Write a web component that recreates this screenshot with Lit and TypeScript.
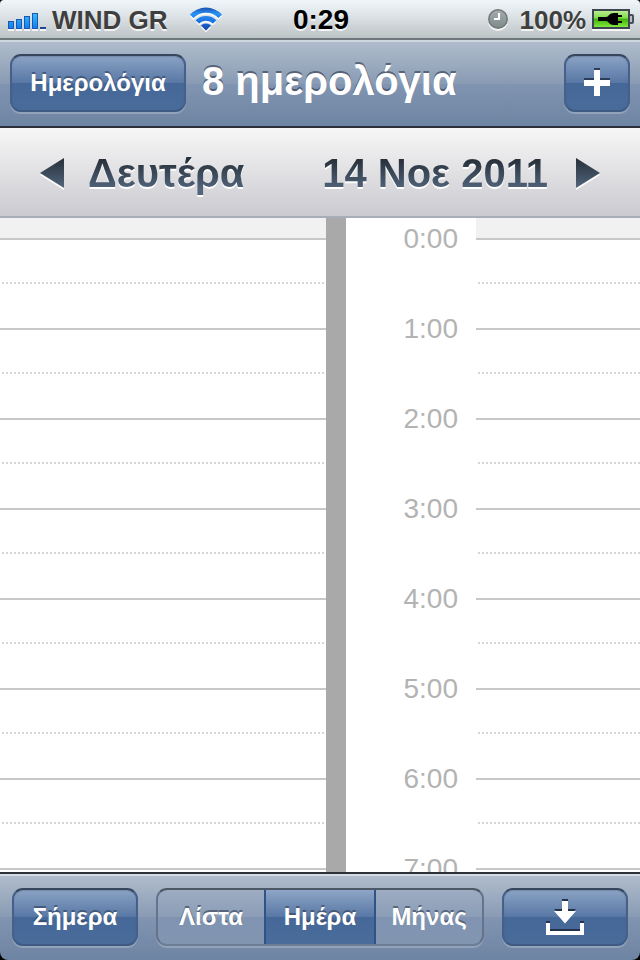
import { LitElement, html, css, svg } from "lit";
import { customElement, property, state } from "lit/decorators.js";
import { classMap } from "lit/directives/class-map.js";

const FONT = css`"Liberation Sans", Arial, Helvetica, sans-serif`;

const buttonStyles = css`
  button {
    font: bold 24px/54px ${FONT};
    color: #fff;
    margin: 0;
    padding: 0;
    text-align: center;
    white-space: nowrap;
    cursor: pointer;
  }
  .push {
    box-sizing: border-box;
    height: 58px;
    border: 2px solid;
    border-color: #37465c #46608a #3f5a83;
    border-radius: 11px;
    background: linear-gradient(#8ea6c6 0, #5877a5 50%, #466898 50%, #4a6c9b 100%) border-box;
    box-shadow: 0 2px 0 rgba(255, 255, 255, 0.22), inset 0 1px 1px rgba(30, 50, 80, 0.2);
    text-shadow: 0 -2px 0 rgba(40, 55, 80, 0.55);
  }
  svg {
    display: block;
    margin: 0 auto;
  }
`;

@customElement("status-bar")
class StatusBar extends LitElement {
  static styles = css`
    :host {
      display: grid;
      grid-template-columns: 1fr auto 1fr;
      align-items: center;
      box-sizing: border-box;
      height: 40px;
      padding: 2px 6px 0 8px;
      background: linear-gradient(#f0f7fa, #dbe1e4 45%, #bcc3c5);
      border-bottom: 2px solid #6e777c;
      font: bold 26px/36px ${FONT};
      color: #3f3f3f;
      text-shadow: 0 2px 0 rgba(255, 255, 255, 0.8);
    }
    .side {
      display: flex;
      align-items: center;
      white-space: nowrap;
    }
    .end {
      justify-content: flex-end;
    }
    .carrier {
      margin: 0 22px 0 6px;
    }
    .time {
      font-size: 28px;
      color: #000;
    }
    .percent {
      margin: 0 6px 0 12px;
    }
    svg {
      display: block;
      flex: none;
    }
  `;

  render() {
    const bars = [
      [0, 8],
      [8, 10],
      [16, 13],
      [24, 16],
    ];
    return html`
      <div class="side">
        <svg width="38" height="22" viewBox="0 0 38 22" role="img" aria-label="Signal">
          <defs>
            <linearGradient id="sig" gradientUnits="userSpaceOnUse" x1="0" y1="4" x2="0" y2="20">
              <stop offset="0" stop-color="#35c0fb" />
              <stop offset="1" stop-color="#0f7cf0" />
            </linearGradient>
          </defs>
          ${bars.map(
            ([x, h]) => svg`
              <rect x=${x} y=${22 - h} width="6" height=${h} fill="#fff" opacity=".8" />
              <rect x=${x + 0.5} y=${20.5 - h} width="5" height=${h - 1} fill="url(#sig)" stroke="#1c57b4" />`
          )}
          <rect x="32" y="20" width="6" height="2" fill="#fff" opacity=".8" />
          <rect x="32" y="18" width="6" height="2" fill="#1c4596" />
        </svg>
        <span class="carrier">WIND GR</span>
        <svg width="32" height="26" viewBox="0 0 32 26" role="img" aria-label="Wi-Fi">
          <defs>
            <linearGradient id="wifi" gradientUnits="userSpaceOnUse" x1="0" y1="1" x2="0" y2="24">
              <stop offset="0" stop-color="#1d55b4" />
              <stop offset=".25" stop-color="#2a92f4" />
              <stop offset=".6" stop-color="#1a70e4" />
              <stop offset="1" stop-color="#0f3a9e" />
            </linearGradient>
            <g id="waves">
              <path d="M0 7.500 A22 22 0 0 1 32 7.500 L28.500 11 A17.500 17.500 0 0 0 3.500 11 Z" />
              <path d="M5.700 13.200 A14.500 14.500 0 0 1 26.300 13.200 L23 16.500 A10 10 0 0 0 9 16.500 Z" />
              <path d="M11 18.500 A7 7 0 0 1 21 18.500 L16 23.500 Z" />
            </g>
          </defs>
          <use href="#waves" y="2" fill="#fff" opacity=".8" />
          <use href="#waves" fill="url(#wifi)" />
        </svg>
      </div>
      <span class="time">0:29</span>
      <div class="side end">
        <svg width="20" height="22" viewBox="0 0 20 22" role="img" aria-label="Alarm">
          <defs>
            <linearGradient id="clk" x1="0" y1="0" x2="0" y2="1">
              <stop offset="0" stop-color="#a3acac" />
              <stop offset="1" stop-color="#7f8a8a" />
            </linearGradient>
          </defs>
          <circle cx="10" cy="12" r="10" fill="#fff" opacity=".8" />
          <circle cx="10" cy="10" r="10" fill="#6f7877" />
          <circle cx="10" cy="10" r="8.500" fill="url(#clk)" />
          <path d="M11 4 V10 H6" fill="none" stroke="#fff" stroke-width="2" />
        </svg>
        <span class="percent">100%</span>
        <svg width="42" height="22" viewBox="0 0 42 22" role="img" aria-label="Battery charging">
          <defs>
            <linearGradient id="bat" x1="0" y1="0" x2="0" y2="1">
              <stop offset="0" stop-color="#c0ee98" />
              <stop offset=".45" stop-color="#7fdc4a" />
              <stop offset=".5" stop-color="#3fae0a" />
              <stop offset="1" stop-color="#8af045" />
            </linearGradient>
          </defs>
          <rect y="20" width="38" height="2" fill="#fff" opacity=".8" />
          <path d="M38 5 H40 Q42 5 42 7 V13 Q42 15 40 15 H38 Z" fill="#4a4f5c" />
          <rect x="38" y="7" width="2" height="6" fill="#b9bfc4" />
          <rect x="1" y="1" width="36" height="18" fill="url(#bat)" stroke="#3e4450" stroke-width="2" />
          <path
            d="M6 8 H14 Q16 8 17 6 Q18.500 4 22 4 H26 V6 H30 V8 H26 V12 H30 V14 H26 V16 H22 Q18.500 16 17 14 Q16 12 14 12 H6 Z"
            fill="#000"
          />
        </svg>
      </div>
    `;
  }
}

@customElement("nav-header")
class NavHeader extends LitElement {
  static styles = [
    buttonStyles,
    css`
      :host {
        display: flex;
        align-items: flex-start;
        gap: 16px;
        box-sizing: border-box;
        height: 88px;
        padding: 12px 10px 0;
        border-top: 2px solid #cdd5df;
        border-bottom: 2px solid #2d3039;
        background: linear-gradient(#b0bccd, #889bb3 50%, #8195b2 50%, #6d84a2);
      }
      .calendars {
        flex: none;
        width: 176px;
      }
      .add {
        flex: none;
        width: 66px;
      }
      h1 {
        flex: 1;
        margin: 0;
        font: bold 40px/54px ${FONT};
        color: #fff;
        text-shadow: 0 -2px 0 rgba(50, 60, 80, 0.65);
        white-space: nowrap;
      }
    `,
  ];

  render() {
    return html`
      <button class="push calendars">Ημερολόγια</button>
      <h1>8 ημερολόγια</h1>
      <button class="push add" aria-label="Προσθήκη">
        <svg width="26" height="30" viewBox="0 0 26 30">
          <path d="M10 0 H16 V10 H26 V16 H16 V26 H10 V16 H0 V10 H10 Z" fill="#2c3d58" />
          <path d="M10 2 H16 V12 H26 V18 H16 V28 H10 V18 H0 V12 H10 Z" fill="#fff" />
        </svg>
      </button>
    `;
  }
}

@customElement("date-strip")
class DateStrip extends LitElement {
  @property() weekday = "";
  @property() date = "";

  static styles = css`
    :host {
      display: flex;
      align-items: center;
      box-sizing: border-box;
      height: 90px;
      padding: 2px 40px 0;
      gap: 24px;
      background: linear-gradient(#f7f7f7, #cbcad0);
      border-bottom: 2px solid #a8aeb8;
    }
    button {
      flex: none;
      margin: 0;
      padding: 2px 0 0;
      border: 0;
      background: none;
      cursor: pointer;
    }
    svg {
      display: block;
    }
    h2 {
      flex: 1;
      display: flex;
      justify-content: space-between;
      margin: 0;
      padding-right: 4px;
      font: bold 40px/46px ${FONT};
      white-space: nowrap;
      filter: drop-shadow(0 2px 0 #fff);
    }
    .label {
      color: transparent;
      background: linear-gradient(#27303a 20%, #52657c 85%);
      -webkit-background-clip: text;
      background-clip: text;
    }
  `;

  private arrow(d: string) {
    return html`<svg width="24" height="32" viewBox="0 0 24 32">
      <defs>
        <linearGradient id="tri" x1="0" y1="0" x2="0" y2="1">
          <stop offset="0" stop-color="#27303a" />
          <stop offset="1" stop-color="#52657c" />
        </linearGradient>
      </defs>
      <path d=${d} fill="#fff" transform="translate(0 2)" />
      <path d=${d} fill="url(#tri)" />
    </svg>`;
  }

  render() {
    return html`
      <button aria-label="Προηγούμενη">${this.arrow("M24 0 V30 L0 15 Z")}</button>
      <h2>
        <span class="label">${this.weekday}</span>
        <span class="label">${this.date}</span>
      </h2>
      <button aria-label="Επόμενη">${this.arrow("M0 0 V30 L24 15 Z")}</button>
    `;
  }
}

@customElement("day-grid")
class DayGrid extends LitElement {
  @property({ type: Number }) hours = 24;

  static styles = css`
    :host {
      display: grid;
      grid-template-columns: 326fr 20px 130px 164fr;
      overflow: hidden auto;
      scrollbar-width: none;
      background: #fff;
    }
    .lane {
      padding-top: 20px;
      background: linear-gradient(#f1f1f1, #f1f1f1) 0 0 / 100% 20px no-repeat;
    }
    .hour {
      box-sizing: border-box;
      height: 90px;
      border-top: 2px solid #c8c8c8;
    }
    .half {
      height: 2px;
      padding: 42px 0 0 2px;
      background: repeating-linear-gradient(90deg, #d6d6d6 0 2px, transparent 2px 4px) content-box;
    }
    .divider {
      background: #a9a9a9;
    }
    .times {
      display: flex;
      flex-direction: column;
      gap: 48px;
      padding-right: 18px;
      font: 28px/42px ${FONT};
      color: #b3b3b3;
      text-align: right;
    }
  `;

  render() {
    const hours = Array.from({ length: this.hours }, (_, h) => h);
    const lane = html`<div class="lane">
      ${hours.map(() => html`<div class="hour"><div class="half"></div></div>`)}
    </div>`;
    return html`
      ${lane}
      <div class="divider"></div>
      <div class="times">${hours.map((h) => html`<time>${h}:00</time>`)}</div>
      ${lane}
    `;
  }
}

@customElement("tool-bar")
class ToolBar extends LitElement {
  @state() private view = "Ημέρα";

  static styles = [
    buttonStyles,
    css`
      :host {
        display: grid;
        grid-template-columns: 126fr 328fr 126fr;
        align-items: center;
        gap: 18px;
        box-sizing: border-box;
        height: 88px;
        padding: 0 12px;
        border-top: 2px solid #2d3039;
        background: linear-gradient(#d5dce4 2px, #b0bccd 2px, #889bb3 50%, #8195b2 50%, #6d84a2);
      }
      .segments {
        display: grid;
        grid-template-columns: 1fr 112px 1fr;
        box-sizing: border-box;
        height: 58px;
        border: 2px solid;
        border-color: #4d5866 #64748c #6c7d95;
        border-radius: 11px;
        overflow: hidden;
        background: linear-gradient(#9eadc2, #8b9db7 50%, #8094b2 50%, #8296b1) border-box;
        box-shadow: 0 2px 0 rgba(255, 255, 255, 0.22);
      }
      .segment {
        border: 0;
        background: none;
        text-shadow: 0 -2px 0 rgba(50, 60, 80, 0.6);
      }
      .selected {
        border: solid #2f5388;
        border-width: 0 2px;
        background: linear-gradient(#8ea6c6, #5877a5 50%, #466898 50%, #4a6c9b);
      }
    `,
  ];

  render() {
    return html`
      <button class="push">Σήμερα</button>
      <div class="segments" role="group">
        ${["Λίστα", "Ημέρα", "Μήνας"].map(
          (name) => html`<button
            class=${classMap({ segment: true, selected: name === this.view })}
            aria-pressed=${name === this.view}
            @click=${() => (this.view = name)}
          >${name}</button>`
        )}
      </div>
      <button class="push" aria-label="Εισερχόμενα">
        <svg width="38" height="36" viewBox="0 0 38 36">
          <g fill="#22324c">
            <path d="M16 0 H22 V10 H30 L19 22 L8 10 H16 Z" />
            <path d="M0 22 H4 V30 H34 V22 H38 V34 H0 Z" />
          </g>
          <g fill="#fff">
            <path d="M16 2 H22 V12 H30 L19 24.500 L8 12 H16 Z" />
            <path d="M0 24 H4 V32 H34 V24 H38 V36 H0 Z" />
          </g>
        </svg>
      </button>
    `;
  }
}

@customElement("app-root")
class AppRoot extends LitElement {
  static styles = css`
    :host {
      display: block;
      background: #000;
    }
    .screen {
      display: flex;
      flex-direction: column;
      height: 100vh;
      overflow: hidden;
      border-radius: 4px 4px 8px 8px;
    }
    status-bar,
    nav-header,
    date-strip,
    tool-bar {
      flex: none;
    }
    day-grid {
      flex: 1;
      min-height: 0;
    }
  `;

  render() {
    return html`
      <div class="screen">
        <status-bar></status-bar>
        <nav-header></nav-header>
        <date-strip weekday="Δευτέρα" date="14 Νοε 2011"></date-strip>
        <day-grid hours="8"></day-grid>
        <tool-bar></tool-bar>
      </div>
    `;
  }
}
